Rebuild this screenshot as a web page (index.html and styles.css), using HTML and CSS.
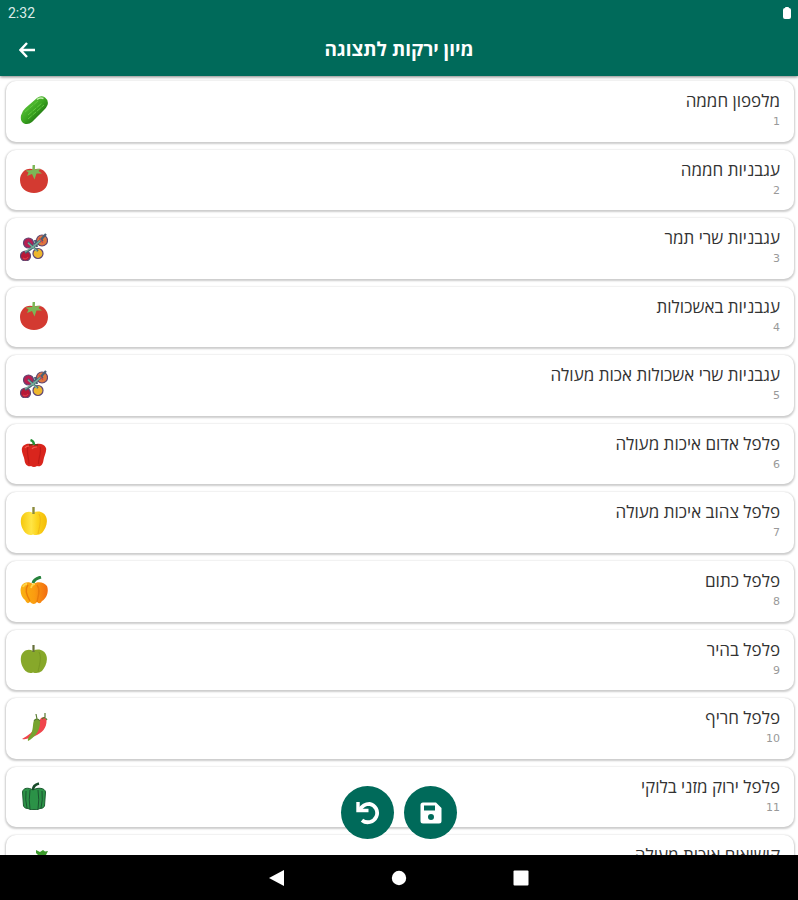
FILE: index.html
```html
<!DOCTYPE html>
<html lang="he" dir="rtl">
<head>
<meta charset="utf-8">
<meta name="viewport" content="width=device-width, initial-scale=1">
<title>מיון ירקות לתצוגה</title>
<link rel="stylesheet" href="styles.css">
</head>
<body>
<svg class="defs" aria-hidden="true">
  <defs>
    <linearGradient id="cucG" x1="0" y1="0" x2="1" y2="1"><stop offset=".2" stop-color="#5cc43c"/><stop offset=".5" stop-color="#3aa51f"/><stop offset=".85" stop-color="#17630d"/></linearGradient>
    <linearGradient id="yelG"><stop offset="0" stop-color="#f6c80c"/><stop offset=".4" stop-color="#ffe545"/><stop offset=".65" stop-color="#fbd21a"/><stop offset="1" stop-color="#f3bb08"/></linearGradient>
    <linearGradient id="oraG"><stop offset="0" stop-color="#f9b112"/><stop offset=".5" stop-color="#fb9d10"/><stop offset="1" stop-color="#f26c12"/></linearGradient>
    <symbol id="cucumber" viewBox="0 0 28 28">
      <path d="M1 19.500Q2 15 5.500 12L17 2Q21-1 25 1.500Q29 4.500 27.500 9Q26.500 12 23 15L12 26Q8.500 29 4 27.500Q0 25.500 1 19.500Z" fill="url(#cucG)"/>
      <path d="M5 16L18 5M8 19L22 7M8 23L24 9" stroke="#62c83f" stroke-width="1" stroke-dasharray="5 1" fill="none"/>
      <path d="M17 3.500Q20 1 23.500 2.500" stroke="#c5ecb0" stroke-width="1.600" fill="none"/>
    </symbol>
    <symbol id="tomato" viewBox="0 0 28 28">
      <path d="M14 4.500C21 1.500 28 7 28 15C28 23 22 28 14 28C6 28 0 23 0 15C0 7 7 1.500 14 4.500Z" fill="#d33a31"/>
      <path d="M12.600 0H15L14.900 4.500L20.500 3.500L18.500 6L22 8.500L16.500 8.500L14.500 14.500L12 9L7 11L8.500 7.500L5.500 5.500L12.300 5Z" fill="#7cb656"/>
    </symbol>
    <symbol id="cherry" viewBox="0 0 28 28">
      <g stroke="#5f4672" stroke-width="1.200">
        <circle cx="8.500" cy="10" r="5" fill="#b91d50"/><circle cx="22" cy="7.500" r="5.500" fill="#df773f"/>
        <circle cx="5.500" cy="23" r="5" fill="#b71838"/><circle cx="18" cy="20.500" r="5" fill="#eeb72d"/>
      </g>
      <path d="M5 20Q15 14 26 1M8 9L13 14L18 18M14 11L23 7M15 7L17 14" stroke="#4a5f72" stroke-width="2.200" fill="none"/>
      <path d="M5 19Q14 14 21 7M8 10L17 18" stroke="#74b19a" stroke-width="1.400" fill="none"/>
      <path d="M3 25Q6 27 8 24M19 5L23 10" stroke="#d83d49" stroke-width="1.200" fill="none"/>
    </symbol>
    <symbol id="redpepper" viewBox="0 0 28 28">
      <path d="M13 6.500C10 3 3 5 2 9C1 13 4 17 4.500 21C5 26 8 28 11 27Q14 29 17 27C21 28.500 23 25 23.500 21C24 17 27 12 26 9C24 4 17 4 13 6.500Z" fill="#d9251d"/>
      <path d="M8 8C6 12 9 20 9 25M20 8C22 13 18 20 18.500 25" stroke="#c01b17" stroke-width="1.200" fill="none"/>
      <path d="M5 9Q6 7 9 7M12 10Q13 8 17 8" stroke="#f05a4e" stroke-width="1.200" fill="none"/>
      <path d="M9 6Q13 5 18 6" stroke="#7b3517" stroke-width="1.400" fill="none"/>
      <path d="M14 6Q14 2 10.500 1" stroke="#259238" stroke-width="2.400" fill="none"/>
    </symbol>
    <symbol id="yellowpepper" viewBox="0 0 28 28">
      <path d="M13 6C8 3 2 6 1 12C0 18 3 23 5.500 26Q9 29 13 27.500Q18 29 22 26C25 22 28 17 26.500 11C25 5 18 3 13 6Z" fill="url(#yelG)"/>
      <path d="M19 7C22 13 19 21 18 27" stroke="#efb814" stroke-width="1" fill="none"/>
      <path d="M13.500 7V0" stroke="#8b8b3b" stroke-width="2.400"/>
    </symbol>
    <symbol id="orangepepper" viewBox="0 0 28 28">
      <path d="M13 8C9 5 4 6 2 9C-1 14 1 21 5 24Q7 29 10 26Q14 30 17 26Q20 29 22 25C27 22 29 15 27 10C24 6 18 5 13 8Z" fill="url(#oraG)"/>
      <path d="M8 9C4 14 7 20 10 25M17 9C21 14 18 20 17 26" stroke="#e87c0a" stroke-width="1.400" fill="none"/>
      <path d="M3 11Q4 8 7 8M11 12Q12 8 15 8" stroke="#ffd548" stroke-width="1.800" fill="none"/>
      <path d="M13 7Q14 3 21 1" stroke="#26823c" stroke-width="3" fill="none"/>
    </symbol>
    <symbol id="lightpepper" viewBox="0 0 28 28">
      <path d="M13 6C8 3 2 6 1 12C0 18 3 23 5.500 26Q9 29 13 27.500Q18 29 22 26C25 22 28 17 26.500 11C25 5 18 3 13 6Z" fill="#87a82a"/>
      <path d="M19 7C22 13 19 21 18 27" stroke="#789822" stroke-width="1" fill="none"/>
      <path d="M13.500 7V0" stroke="#66703a" stroke-width="2.200"/>
    </symbol>
    <symbol id="chili" viewBox="0 0 28 28">
      <path d="M21 5Q25 3 26.500 7C27 15 22 20 15 23Q8 27 2 26Q13 20 17 12Z" fill="#f0454c"/>
      <path d="M15 6Q20 5 20 10C20 18 14 25 8 28Q7 26 11 21C14 15 12 9 15 6Z" fill="#76a42f"/>
      <path d="M14 8Q17 4 20 8M17 6L16 1M22 6Q25 3 27 7M25 5V0" stroke="#597b31" stroke-width="1.200" fill="none"/>
    </symbol>
    <symbol id="greenpepper" viewBox="0 0 28 28">
      <path d="M13 8C8 5 3 6 2.500 10L3.500 24Q5 27 8 26.500Q11 28.500 14 27.500Q17 28.500 20 26.500Q23 27 24.500 24L25.500 10C25 6 18 5 13 8Z" fill="#2b9247" stroke="#1d5c31" stroke-width="1"/>
      <path d="M10 8Q8.500 18 10 27M18 8Q19.500 18 18 27M6 9Q5 18 7 26M22 9Q23 18 21 26" stroke="#1a5530" stroke-width="1" fill="none"/>
      <path d="M13 8Q13 3 19 1.500" stroke="#174b29" stroke-width="2.600" fill="none"/>
    </symbol>
    <symbol id="zucchini" viewBox="0 0 28 28">
      <path d="M16 0L20 2L23 0L25 1.500L28 1L26 5L27 9L22 8L18 11L19 6L16 3Z" fill="#3c9a2b"/>
      <path d="M20 8Q24 10 23 15L10 27Q5 29 2 25Q0 21 4 18Z" fill="#4aa72f"/>
    </symbol>
  </defs>
</svg>

<div class="app">
  <header class="top">
    <div class="status" dir="ltr">
      <time class="clock">2:32</time>
      <svg class="battery" viewBox="0 0 8 12" aria-hidden="true"><path d="M2 1Q2 0 3 0H5Q6 0 6 1Q8 1 8 3V10Q8 12 6 12H2Q0 12 0 10V3Q0 1 2 1Z" fill="#fff"/></svg>
    </div>
    <div class="bar" dir="ltr">
      <button class="back" aria-label="חזרה"><svg viewBox="0 0 16 16"><path d="M16 8H1.500M8 1L1.500 8L8 15" fill="none" stroke="#fff" stroke-width="2.400"/></svg></button>
      <h1 class="title" dir="rtl">מיון ירקות לתצוגה</h1>
    </div>
  </header>

  <main class="content">
    <ol class="list">
      <li class="card"><div class="text"><h2 class="name">מלפפון חממה</h2><p class="rank">1</p></div><svg class="veg"><use href="#cucumber"/></svg></li>
      <li class="card"><div class="text"><h2 class="name">עגבניות חממה</h2><p class="rank">2</p></div><svg class="veg"><use href="#tomato"/></svg></li>
      <li class="card"><div class="text"><h2 class="name">עגבניות שרי תמר</h2><p class="rank">3</p></div><svg class="veg"><use href="#cherry"/></svg></li>
      <li class="card"><div class="text"><h2 class="name">עגבניות באשכולות</h2><p class="rank">4</p></div><svg class="veg"><use href="#tomato"/></svg></li>
      <li class="card"><div class="text"><h2 class="name">עגבניות שרי אשכולות אכות מעולה</h2><p class="rank">5</p></div><svg class="veg"><use href="#cherry"/></svg></li>
      <li class="card"><div class="text"><h2 class="name">פלפל אדום איכות מעולה</h2><p class="rank">6</p></div><svg class="veg"><use href="#redpepper"/></svg></li>
      <li class="card"><div class="text"><h2 class="name">פלפל צהוב איכות מעולה</h2><p class="rank">7</p></div><svg class="veg"><use href="#yellowpepper"/></svg></li>
      <li class="card"><div class="text"><h2 class="name">פלפל כתום</h2><p class="rank">8</p></div><svg class="veg"><use href="#orangepepper"/></svg></li>
      <li class="card"><div class="text"><h2 class="name">פלפל בהיר</h2><p class="rank">9</p></div><svg class="veg"><use href="#lightpepper"/></svg></li>
      <li class="card"><div class="text"><h2 class="name">פלפל חריף</h2><p class="rank">10</p></div><svg class="veg"><use href="#chili"/></svg></li>
      <li class="card"><div class="text"><h2 class="name">פלפל ירוק מזני בלוקי</h2><p class="rank">11</p></div><svg class="veg"><use href="#greenpepper"/></svg></li>
      <li class="card"><div class="text"><h2 class="name">קישואים איכות מעולה</h2></div><svg class="veg"><use href="#zucchini"/></svg></li>
    </ol>
    <div class="actions">
      <button class="fab" aria-label="שמירה"><svg viewBox="0 0 24 24"><path fill="#fff" fill-rule="evenodd" d="M4 1.500H17L22.500 7V20Q22.500 22.500 20 22.500H4Q1.500 22.500 1.500 20V4Q1.500 1.500 4 1.500ZM5 4.500V9.500H16V4.500ZM12 13A3 3 0 1 0 12 19A3 3 0 1 0 12 13Z"/></svg></button>
      <button class="fab" aria-label="ביטול"><svg viewBox="0 0 24 24"><path d="M2 1V9.500H12.500" fill="none" stroke="#fff" stroke-width="3.400"/><path d="M3.500 9C6 5 9 2.800 13.500 2.800A9.300 9.300 0 1 1 6 19.200" fill="none" stroke="#fff" stroke-width="3.800"/></svg></button>
    </div>
  </main>

  <nav class="sysnav" dir="ltr">
    <button class="key" aria-label="Back"><svg viewBox="0 0 16 16"><path d="M15 0V16L0 8Z" fill="#fff"/></svg></button>
    <button class="key" aria-label="Home"><svg viewBox="0 0 16 16"><circle cx="8" cy="8" r="7.200" fill="#fff"/></svg></button>
    <button class="key" aria-label="Recents"><svg viewBox="0 0 16 16"><rect x=".5" y=".5" width="15" height="15" rx="1" fill="#fff"/></svg></button>
  </nav>
</div>
</body>
</html>
```
FILE: styles.css
```css
* {
  box-sizing: border-box;
}

body {
  margin: 0;
  font-family: "Open Sans", "Noto Sans", "DejaVu Sans", sans-serif;
  background: #fff;
}

button {
  display: flex;
  align-items: center;
  justify-content: center;
  padding: 0;
  border: 0;
  background: none;
  cursor: pointer;
}

.defs {
  position: absolute;
  width: 0;
  height: 0;
}

.app {
  display: flex;
  flex-direction: column;
  height: 100vh;
}

.top {
  flex: none;
  z-index: 1;
  background: #006a5a;
  color: #fff;
  box-shadow: 0 1px 3px rgba(0, 0, 0, 0.5);
}

.status {
  display: flex;
  align-items: center;
  justify-content: space-between;
  height: 24px;
  padding: 2px 7px 0 8px;
}

.clock {
  font: 14px/20px Roboto, sans-serif;
  color: #dcebe8;
}

.battery {
  width: 8px;
  height: 12px;
}

.bar {
  display: grid;
  grid-template-columns: 54px 1fr 54px;
  height: 52px;
  align-items: center;
}

.back {
  height: 52px;
}

.back svg {
  width: 16px;
  height: 16px;
}

.title {
  margin: 0;
  padding-bottom: 2px;
  text-align: center;
  font-size: 19px;
  line-height: 24px;
  font-weight: 700;
}

.content {
  position: relative;
  flex: 1;
  min-height: 0;
  overflow: hidden;
}

.list {
  display: grid;
  grid-auto-rows: 1fr;
  gap: 8px;
  height: calc(100% + 41px);
  margin: 0;
  padding: 5px 4px 0 6px;
  list-style: none;
}

.card {
  display: flex;
  align-items: flex-start;
  justify-content: space-between;
  padding: 9px 14px 0;
  border-radius: 10px;
  background: #fff;
  box-shadow: 0 1px 2px 1px rgba(0, 0, 0, 0.2);
}

.name {
  margin: 0;
  font-size: 17px;
  line-height: 22px;
  font-weight: 400;
  color: #333;
}

.rank {
  margin: 0;
  font: 11px/20px "DejaVu Sans", sans-serif;
  color: #999;
}

.veg {
  flex: none;
  width: 28px;
  height: 28px;
  margin-top: 6px;
}

.actions {
  position: absolute;
  bottom: 16px;
  left: 0;
  right: 0;
  display: flex;
  justify-content: center;
  gap: 10px;
}

.fab {
  width: 53px;
  height: 53px;
  border-radius: 50%;
  background: #006a5a;
}

.fab svg {
  width: 24px;
  height: 24px;
}

.sysnav {
  flex: none;
  display: flex;
  justify-content: center;
  align-items: center;
  gap: 106px;
  height: 45px;
  background: #000;
}

.key svg {
  width: 16px;
  height: 16px;
}
```
